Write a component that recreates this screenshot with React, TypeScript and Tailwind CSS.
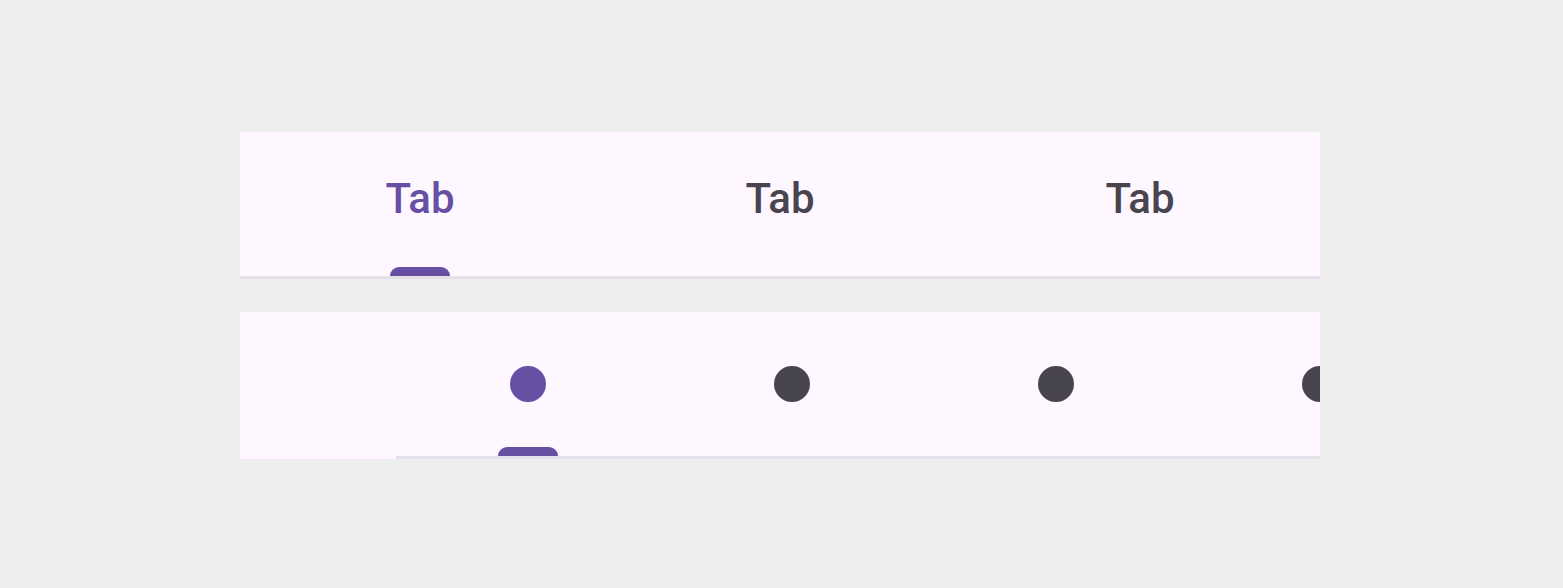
import React from 'react';

const TEXT_TABS = ['Tab', 'Tab', 'Tab'];
const DOT_TABS = [0, 1, 2, 3];

const App: React.FC = () => {
  const active = 0;

  return (
    <div className="min-h-[588px] bg-[#eeeeee] pt-[132px] px-[240px] font-['Roboto',sans-serif]">
      {/* Fixed text tabs */}
      <div className="w-[1080px] bg-[#fef7ff]">
        <div className="grid grid-cols-3 h-[144px]">
          {TEXT_TABS.map((label, i) => (
            <div key={i} className="relative flex justify-center pt-[46px]">
              <span
                className={`text-[42px] leading-[42px] font-medium ${i === active ? 'text-[#6750a4]' : 'text-[#49454f]'}`}
              >
                {label}
              </span>
              {i === active && (
                <div className="absolute bottom-0 left-1/2 -translate-x-1/2 w-[60px] h-[9px] rounded-t-[9px] bg-[#6750a4]" />
              )}
            </div>
          ))}
        </div>
        <div className="h-[3px] bg-[#e6e0e9]" />
      </div>

      {/* Scrollable icon tabs */}
      <div className="mt-[33px] w-[1080px] flex">
        <div className="w-[156px] h-[147px] shrink-0 bg-[#fef7ff]" />
        <div className="flex-1 overflow-hidden">
          <div className="flex h-[144px] bg-[#fef7ff]">
            {DOT_TABS.map((i) => (
              <div key={i} className="relative w-[264px] shrink-0 flex items-center justify-center">
                <div className={`w-[36px] h-[36px] rounded-full ${i === active ? 'bg-[#6750a4]' : 'bg-[#49454f]'}`} />
                {i === active && (
                  <div className="absolute bottom-0 left-1/2 -translate-x-1/2 w-[60px] h-[9px] rounded-t-[9px] bg-[#6750a4]" />
                )}
              </div>
            ))}
          </div>
          <div className="h-[3px] bg-[#e6e0e9]" />
        </div>
      </div>
    </div>
  );
};

export default App;
